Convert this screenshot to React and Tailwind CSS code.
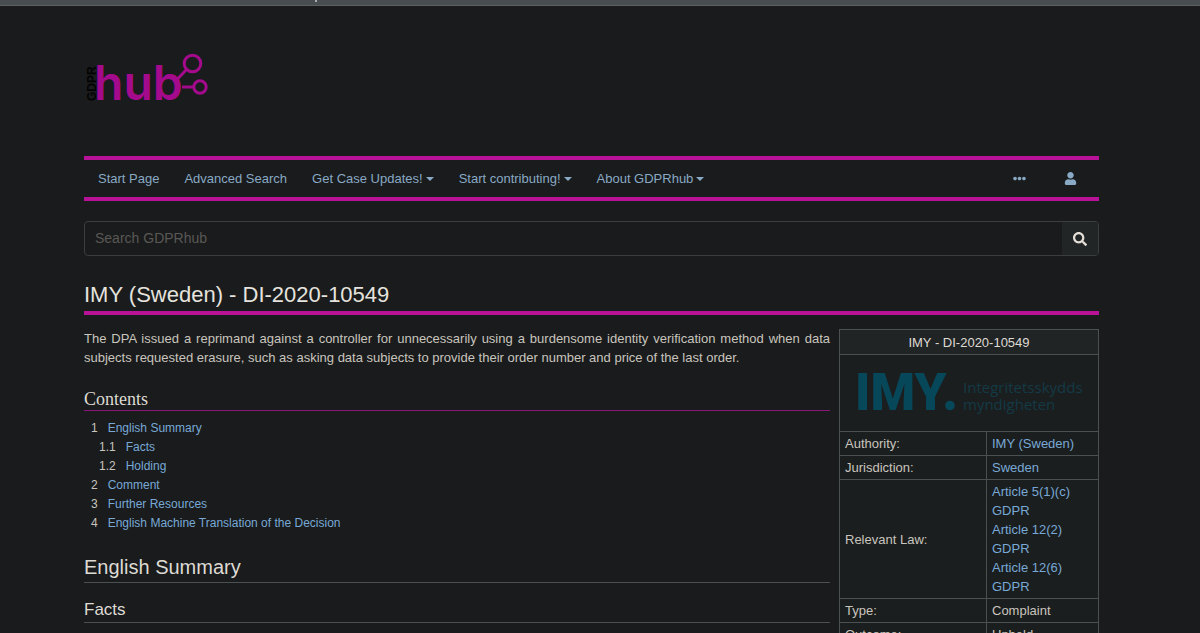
import { FaUser, FaSearch, FaEllipsisH } from "react-icons/fa";

const menu = [
  { label: "Start Page" },
  { label: "Advanced Search" },
  { label: "Get Case Updates!", dropdown: true },
  { label: "Start contributing!", dropdown: true },
  { label: "About GDPRhub", dropdown: true },
];

const contents = [
  { number: "1", label: "English Summary" },
  { number: "1.1", label: "Facts", nested: true },
  { number: "1.2", label: "Holding", nested: true },
  { number: "2", label: "Comment" },
  { number: "3", label: "Further Resources" },
  { number: "4", label: "English Machine Translation of the Decision" },
];

const articles = ["Article 5(1)(c)", "Article 12(2)", "Article 12(6)"];

function Logo() {
  return (
    <svg width="124" height="76" viewBox="84 40 124 76" role="img" aria-label="GDPRhub">
      <text
        transform="translate(96 101) rotate(-90)"
        fontFamily="'Liberation Sans', sans-serif"
        className="fill-[#030303] text-[12px] font-bold"
      >
        GDPR
      </text>
      <text x="94" y="100" fontFamily="Inter, sans-serif" className="fill-[#a40a8c] text-[48px] font-semibold">
        hub
      </text>
      <g fill="none" stroke="#a40a8c" strokeWidth="3">
        <circle cx="192.500" cy="63.500" r="8.300" />
        <circle cx="200" cy="87" r="6.200" />
        <path d="M186.500 69.500L177.500 79M182 87H194" />
      </g>
    </svg>
  );
}

function AuthorityLogo() {
  return (
    <svg
      width="230"
      height="65"
      viewBox="855 360 230 65"
      role="img"
      aria-label="IMY Integritetsskyddsmyndigheten"
      className="mx-auto"
    >
      <text x="856" y="410" fontFamily="Roboto, sans-serif" className="fill-[#07475a] text-[51px] font-black">
        IMY
      </text>
      <circle cx="951" cy="405.500" r="4.800" fill="#07475a" />
      <g fontFamily="'Open Sans', sans-serif" className="fill-[#133a45] text-[15px]">
        <text x="964" y="393">Integritetsskydds</text>
        <text x="964" y="410">myndigheten</text>
      </g>
    </svg>
  );
}

function Row({ label, children }) {
  return (
    <tr>
      <th scope="row" className="border border-[#4b5052] px-[5px] py-[2px] text-left font-normal">
        {label}
      </th>
      <td className="border border-[#4b5052] px-[5px] py-[2px]">{children}</td>
    </tr>
  );
}

function Link({ children }) {
  return (
    <a href="#" className="text-[#78a9d6]">
      {children}
    </a>
  );
}

export default function App() {
  return (
    <div className="h-screen overflow-hidden bg-[#191b1c] font-['Liberation_Sans',Arial,sans-serif] text-[13px] leading-[19px] text-[#c9c5be]">
      <div className="h-[6px] border-b border-[#5b6063] bg-[#484d50] pl-[315px]">
        <div className="h-[2px] w-[2px] bg-[#a9adaf]" />
      </div>
      <div className="pr-[101px] pl-[84px]">
        <header className="pt-[34px]">
          <a href="#" className="inline-block align-top">
            <Logo />
          </a>
        </header>

        <nav className="mt-[40px] flex items-center justify-between border-y-4 border-[#b81299] px-[14px] py-[9px] text-[#89a9c4]">
          <ul className="flex gap-[25px]">
            {menu.map((item) => (
              <li key={item.label}>
                {item.dropdown ? (
                  <button type="button" className="flex items-center gap-[3px]">
                    {item.label}
                    <svg width="8" height="4" viewBox="0 0 8 4" aria-hidden="true">
                      <path d="M0 0H8L4 4Z" fill="currentColor" />
                    </svg>
                  </button>
                ) : (
                  <a href="#">{item.label}</a>
                )}
              </li>
            ))}
          </ul>
          <div className="flex items-center gap-[38px] pr-2">
            <button type="button" aria-label="More">
              <FaEllipsisH size={13} />
            </button>
            <button type="button" aria-label="Personal tools">
              <FaUser size={13} />
            </button>
          </div>
        </nav>

        <form className="mt-5 flex h-[35px] overflow-hidden rounded border border-[#3a3e40]">
          <input
            type="search"
            aria-label="Search GDPRhub"
            placeholder="Search GDPRhub"
            className="min-w-0 flex-1 bg-transparent px-[10px] text-[14px] outline-none placeholder:text-[#595855]"
          />
          <button
            type="button"
            aria-label="Search"
            className="flex w-9 items-center justify-center bg-[#212526] text-[#e4ded6]"
          >
            <FaSearch size={14} />
          </button>
        </form>

        <h1 className="mt-6 border-b-4 border-[#b81299] pb-px text-[22px] leading-[30px] text-[#e6e3de]">
          IMY (Sweden) - DI-2020-10549
        </h1>

        <div className="mt-[14px] flex items-start gap-[9px]">
          <main className="min-w-0 flex-1">
            <p className="text-justify">
              The DPA issued a reprimand against a controller for unnecessarily using a burdensome identity
              verification method when data subjects requested erasure, such as asking data subjects to provide
              their order number and price of the last order.
            </p>

            <h2 className="mt-[21px] border-b border-b-[#8a1679] font-['Liberation_Serif',serif] text-[18px] leading-[22px] text-[#dedad4]">
              Contents
            </h2>
            <ul className="mt-2 text-[12px]">
              {contents.map((entry) => (
                <li
                  key={entry.number}
                  className={entry.nested ? "flex gap-[10px] pl-[15px]" : "flex gap-[10px] pl-[7px]"}
                >
                  <span>{entry.number}</span>
                  <Link>{entry.label}</Link>
                </li>
              ))}
            </ul>

            <h2 className="mt-[21px] border-b border-[#4b5052] pb-[2px] text-[20px] leading-[26px] text-[#dedad4]">
              English Summary
            </h2>
            <h3 className="mt-4 border-b border-[#4b5052] pb-px text-[17px] leading-[22px] text-[#dedad4]">
              Facts
            </h3>
          </main>

          <table className="w-[260px] shrink-0 table-fixed border-collapse bg-[#1b1e1f]">
            <colgroup>
              <col className="w-[147px]" />
              <col />
            </colgroup>
            <thead>
              <tr>
                <th colSpan={2} className="border border-[#4b5052] bg-[#212425] pt-[3px] pb-[2px] text-center font-normal text-[#dedad4]">
                  IMY - DI-2020-10549
                </th>
              </tr>
            </thead>
            <tbody>
              <tr>
                <td colSpan={2} className="border border-[#4b5052] pt-[5px] pb-[6px]">
                  <AuthorityLogo />
                </td>
              </tr>
              <Row label="Authority:">
                <Link>IMY (Sweden)</Link>
              </Row>
              <Row label="Jurisdiction:">
                <Link>Sweden</Link>
              </Row>
              <Row label="Relevant Law:">
                {articles.map((article) => (
                  <a key={article} href="#" className="block text-[#78a9d6]">
                    {article}
                    <br />
                    GDPR
                  </a>
                ))}
              </Row>
              <Row label="Type:">Complaint</Row>
              <Row label="Outcome:">Upheld</Row>
            </tbody>
          </table>
        </div>
      </div>
    </div>
  );
}
